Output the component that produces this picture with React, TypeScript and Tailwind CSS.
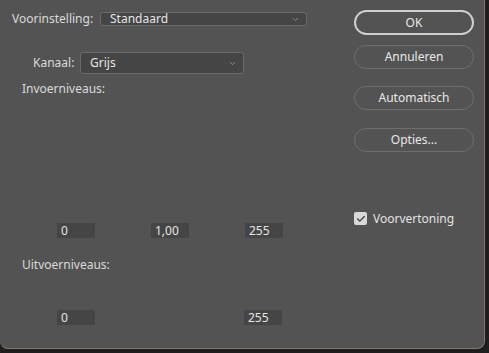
import { Check, ChevronDown } from 'lucide-react';

const font = { fontFamily: '"Noto Sans", "Liberation Sans", sans-serif' };

function Select({ value, className }: { value: string; className: string }) {
  return (
    <div
      className={`flex items-center justify-between border border-[#6a6a6a] bg-[#454545] rounded-[3px] pl-[9px] pr-[6px] text-[12px] text-[#e6e6e6] ${className}`}
    >
      <span>{value}</span>
      <ChevronDown size={9} strokeWidth={1.5} className="text-[#bdbdbd]" />
    </div>
  );
}

function NumberBox({ value }: { value: string }) {
  return (
    <div className="w-[38px] h-[15px] bg-[#454545] text-[12px] leading-[15px] text-[#e6e6e6] pl-[4px]">
      {value}
    </div>
  );
}

function PillButton({ label, primary }: { label: string; primary?: boolean }) {
  return (
    <div
      className={`w-[120px] flex items-center justify-center rounded-full text-[12px] text-[#e8e8e8] ${
        primary ? 'h-[25px] border-2 border-[#cfcfcf]' : 'h-[24px] border border-[#6e6e6e]'
      }`}
    >
      {label}
    </div>
  );
}

export default function App() {
  return (
    <div className="w-[489px] h-[353px] bg-[#1e1e1e] overflow-hidden" style={font}>
      <div className="w-[485px] h-[349px] bg-[#535353] border-r border-b border-[#8c766a] rounded-b-[8px] flex">
        {/* left: presets, channel, levels */}
        <div className="w-[354px] flex flex-col text-[12px] text-[#dadada]">
          <div className="flex items-center mt-[12px] h-[14px]">
            <span className="ml-[12px] w-[88px]">Voorinstelling:</span>
            <Select value="Standaard" className="w-[207px] h-[14px]" />
          </div>

          <div className="flex items-center mt-[26px] h-[22px]">
            <span className="ml-[33px] w-[47px]">Kanaal:</span>
            <Select value="Grijs" className="w-[164px] h-[22px]" />
          </div>

          <div className="ml-[22px] mt-[8px] h-[14px] leading-[14px]">Invoerniveaus:</div>

          <div className="flex mt-[127px] ml-[57px] gap-[56px]">
            <NumberBox value="0" />
            <NumberBox value="1,00" />
            <NumberBox value="255" />
          </div>

          <div className="ml-[22px] mt-[20px] h-[14px] leading-[14px]">Uitvoerniveaus:</div>

          <div className="flex mt-[38px] ml-[57px] gap-[149px]">
            <NumberBox value="0" />
            <NumberBox value="255" />
          </div>
        </div>

        {/* right: buttons */}
        <div className="w-[120px] flex flex-col">
          <div className="mt-[10px]">
            <PillButton label="OK" primary />
          </div>
          <div className="mt-[10px]">
            <PillButton label="Annuleren" />
          </div>
          <div className="mt-[17px]">
            <PillButton label="Automatisch" />
          </div>
          <div className="mt-[18px]">
            <PillButton label="Opties..." />
          </div>
          <div className="flex items-center mt-[60px] h-[13px]">
            <div className="w-[13px] h-[13px] rounded-[2px] bg-[#d9d9d9] flex items-center justify-center">
              <Check size={10} strokeWidth={3} className="text-[#3a3a3a]" />
            </div>
            <span className="ml-[6px] text-[12px] text-[#e4e4e4]">Voorvertoning</span>
          </div>
        </div>
      </div>
    </div>
  );
}
